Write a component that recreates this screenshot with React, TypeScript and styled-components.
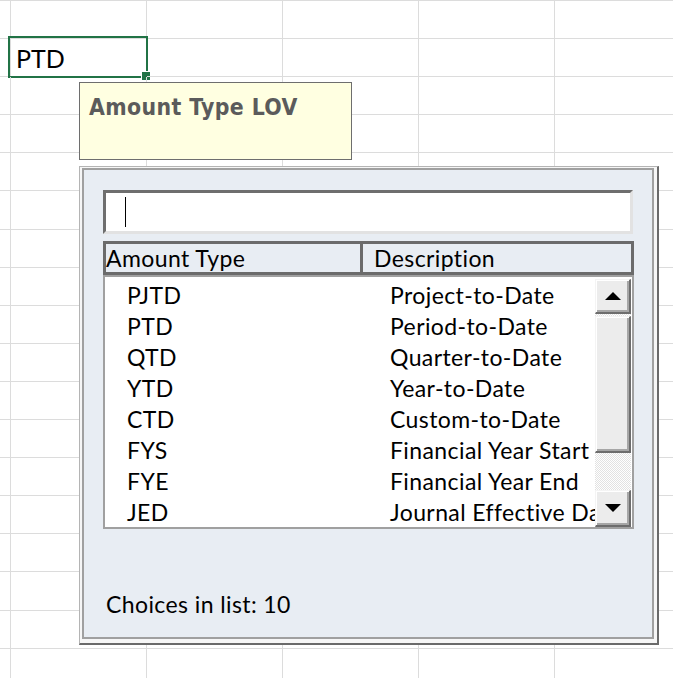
import React from 'react';
import styled, { createGlobalStyle } from 'styled-components';

const GlobalStyle = createGlobalStyle`
  html, body {
    margin: 0;
    padding: 0;
    background: #fff;
  }
  body {
    width: 673px;
    height: 678px;
    overflow: hidden;
    font-family: Lato, "Open Sans", sans-serif;
  }
  * {
    box-sizing: border-box;
  }
`;

const Page = styled.div`
  position: relative;
  width: 673px;
  height: 678px;
  overflow: hidden;
  background: #fff;
`;

// spreadsheet grid behind everything
const Sheet = styled.div`
  display: grid;
  grid-template-columns: 11px repeat(5, 136px);
  grid-auto-rows: 38.1px;
  border-top: 1px solid #dcdcdc;
`;

const Cell = styled.div`
  position: relative;
  display: flex;
  align-items: flex-end;
  padding: 0 0 5px 5px;
  border-right: 1px solid #dcdcdc;
  border-bottom: 1px solid #dcdcdc;
  font-family: Lato, "Open Sans", sans-serif;
  font-size: 25px;
  line-height: 25px;
  color: #000;
`;

const Selection = styled.div`
  position: absolute;
  left: -3px;
  top: -3px;
  right: -2px;
  bottom: -2px;
  border: 2px solid #217346;
`;

const FillHandle = styled.div`
  position: absolute;
  right: -4px;
  bottom: -4px;
  width: 9px;
  height: 9px;
  background: #217346;
  border-left: 1px solid #fff;
  border-top: 1px solid #fff;
`;

const Comment = styled.div`
  position: absolute;
  left: 79px;
  top: 82px;
  width: 273px;
  height: 78px;
  padding: 11px 0 0 9px;
  background: #ffffe1;
  border: 1px solid #6e6e6e;
  font-family: "DejaVu Sans Condensed", "DejaVu Sans", sans-serif;
  font-stretch: condensed;
  font-weight: bold;
  font-size: 22.8px;
  line-height: 26px;
  letter-spacing: 0.4px;
  color: #5b5b5b;
  white-space: nowrap;
`;

const Dialog = styled.div`
  position: absolute;
  left: 79px;
  top: 166px;
  width: 580px;
  height: 479px;
  padding: 1px 3px 4px 2px;
  background: #f6f6f6;
  border-style: solid;
  border-width: 1px 2px 2px 1px;
  border-color: #b4b4b4 #6a6a6a #6a6a6a #b4b4b4;
`;

const Panel = styled.div`
  display: flex;
  flex-direction: column;
  height: 100%;
  padding: 20px 18px 0 19px;
  background: #e8edf3;
  border: 2px solid #a0a0a0;
  font-family: Lato, "Open Sans", sans-serif;
  font-size: 23px;
  letter-spacing: 0.4px;
  color: #000;
`;

const SearchBox = styled.div`
  height: 44px;
  margin-right: 1px;
  padding: 4px 0 0 19px;
  background: #fff;
  border-style: solid;
  border-width: 3px;
  border-color: #6e6e6e #e2e2e2 #e2e2e2 #6e6e6e;
`;

const Caret = styled.span`
  display: block;
  width: 1px;
  height: 30px;
  background: #000;
`;

const HeaderRow = styled.div`
  display: flex;
  height: 34px;
  margin-top: 7px;
  border: 3px solid #6b6b6b;
  background: #e8edf3;
`;

const HeaderCell = styled.div<{ $width?: number; $pad: number }>`
  flex: ${p => (p.$width ? 'none' : '1')};
  width: ${p => (p.$width ? `${p.$width}px` : 'auto')};
  padding-left: ${p => p.$pad}px;
  line-height: 28px;
  white-space: nowrap;
  border-right: ${p => (p.$width ? '3px solid #6b6b6b' : 'none')};
`;

const ListBox = styled.div`
  display: flex;
  height: 254px;
  background: #fff;
  border: 2px solid #a0a0a0;
`;

const Rows = styled.div`
  flex: 1;
  min-width: 0;
  overflow: hidden;
  padding: 3px 0 0 22px;
`;

const Row = styled.div`
  display: flex;
  height: 31px;
  line-height: 31px;
  white-space: nowrap;
`;

const Code = styled.span`
  flex: none;
  width: 263px;
`;

const Desc = styled.span``;

const ScrollBar = styled.div`
  display: flex;
  flex-direction: column;
  flex: none;
  width: 36px;
  margin: 2px 1px 0 0;
`;

const Raised = styled.div<{ $h: number }>`
  display: flex;
  align-items: center;
  justify-content: center;
  flex: none;
  height: ${p => p.$h}px;
  background: #ececec;
  border-style: solid;
  border-width: 1px 2px 2px 1px;
  border-color: #f4f4f4 #6d6d6d #6d6d6d #f4f4f4;
  box-shadow: inset 1px 1px 0 #fff, inset -2px -2px 0 #a6a6a6;
`;

const Track = styled.div`
  flex: 1;
  padding-top: 2px;
  background: repeating-conic-gradient(#e2e2e2 0 25%, #fff 0 50%) 0 0 / 2px 2px;
`;

const Count = styled.div`
  margin-top: 61px;
  padding-left: 3px;
  line-height: 28px;
`;

const Arrow: React.FC<{ down?: boolean }> = ({ down }) => (
  <svg width="16" height="8" viewBox="0 0 16 8">
    <polygon points={down ? '0,0 16,0 8,8' : '8,0 16,8 0,8'} fill="#000" />
  </svg>
);

const choices = [
  ['PJTD', 'Project-to-Date'],
  ['PTD', 'Period-to-Date'],
  ['QTD', 'Quarter-to-Date'],
  ['YTD', 'Year-to-Date'],
  ['CTD', 'Custom-to-Date'],
  ['FYS', 'Financial Year Start'],
  ['FYE', 'Financial Year End'],
  ['JED', 'Journal Effective Date'],
];

const ROWS = 18;
const COLS = 6;

const App: React.FC = () => {
  const cells = [];
  for (let r = 0; r < ROWS; r++) {
    for (let c = 0; c < COLS; c++) {
      const active = r === 1 && c === 1;
      cells.push(
        <Cell key={`${r}-${c}`}>
          {active && (
            <>
              PTD
              <Selection />
              <FillHandle />
            </>
          )}
        </Cell>
      );
    }
  }

  return (
    <Page>
      <GlobalStyle />
      <Sheet>{cells}</Sheet>

      <Comment>Amount Type LOV</Comment>

      <Dialog>
        <Panel>
          <SearchBox>
            <Caret />
          </SearchBox>
          <HeaderRow>
            <HeaderCell $width={257} $pad={0}>Amount Type</HeaderCell>
            <HeaderCell $pad={11}>Description</HeaderCell>
          </HeaderRow>
          <ListBox>
            <Rows>
              {choices.map(([code, desc]) => (
                <Row key={code}>
                  <Code>{code}</Code>
                  <Desc>{desc}</Desc>
                </Row>
              ))}
            </Rows>
            <ScrollBar>
              <Raised $h={35}>
                <Arrow />
              </Raised>
              <Track>
                <Raised $h={137} />
              </Track>
              <Raised $h={37}>
                <Arrow down />
              </Raised>
            </ScrollBar>
          </ListBox>
          <Count>Choices in list: 10</Count>
        </Panel>
      </Dialog>
    </Page>
  );
};

export default App;
